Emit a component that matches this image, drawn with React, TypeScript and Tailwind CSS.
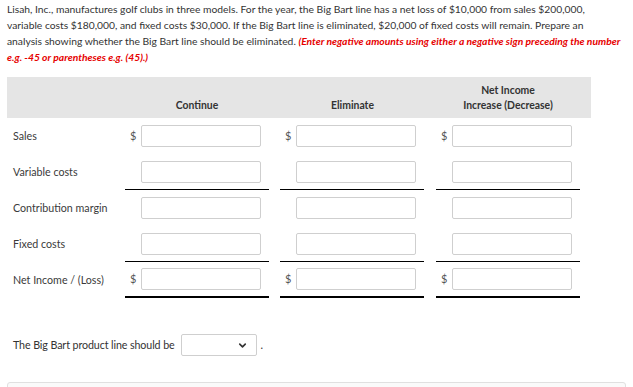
import React from "react"
import { ChevronDown } from "lucide-react"

type Row = {
  label: string
  dollar: boolean
  line: "none" | "single" | "double"
}

const rows: Row[] = [
  { label: "Sales", dollar: true, line: "none" },
  { label: "Variable costs", dollar: false, line: "single" },
  { label: "Contribution margin", dollar: false, line: "none" },
  { label: "Fixed costs", dollar: false, line: "single" },
  { label: "Net Income / (Loss)", dollar: true, line: "double" },
]

const Cell = ({ dollar, line }: { dollar: boolean; line: Row["line"] }) => {
  const border =
    line === "single"
      ? "border-b border-black"
      : line === "double"
        ? "border-b-2 border-black"
        : ""
  return (
    <div className="pr-[11px]">
      <div className={`flex items-center h-[36px] w-[144px] ${border}`}>
        <span className="w-[16px] pl-[5px] text-[11px] text-[#555]">
          {dollar ? "$" : ""}
        </span>
        <input
          type="text"
          className="w-[120px] h-[22px] border border-[#cfcfcf] rounded-[2px] bg-white outline-none"
        />
      </div>
    </div>
  )
}

const App: React.FC = () => {
  return (
    <div
      className="w-[633px] h-[387px] bg-white overflow-hidden px-[7px] pt-[1px] text-[#333]"
      style={{ fontFamily: "Lato, 'Open Sans', sans-serif" }}
    >
      {/* Question text */}
      <p className="text-[10.3px] leading-[16px] w-[622px] whitespace-nowrap">
        Lisah, Inc., manufactures golf clubs in three models. For the year, the Big Bart line has a net loss of $10,000 from sales $200,000,
        <br />
        variable costs $180,000, and fixed costs $30,000. If the Big Bart line is eliminated, $20,000 of fixed costs will remain. Prepare an
        <br />
        analysis showing whether the Big Bart line should be eliminated.{" "}
        <span className="font-bold italic text-[#e60000]">
          (Enter negative amounts using either a negative sign preceding the number
          <br />
          e.g. -45 or parentheses e.g. (45).)
        </span>
      </p>

      {/* Table */}
      <div className="mt-[12px] w-[584px]">
        <div className="grid grid-cols-[118px_155px_156px_155px] h-[41px] bg-[#e5e5e5] text-[10.4px] font-bold leading-[15px] text-[#333]">
          <div />
          <div className="flex items-end justify-center pb-[5px] pr-[11px]">Continue</div>
          <div className="flex items-end justify-center pb-[5px] pr-[11px]">Eliminate</div>
          <div className="flex flex-col items-center justify-end pb-[5px] pr-[11px]">
            <span>Net Income</span>
            <span>Increase (Decrease)</span>
          </div>
        </div>

        {rows.map((row) => (
          <div
            key={row.label}
            className="grid grid-cols-[118px_155px_156px_155px] items-start"
          >
            <div className="h-[36px] flex items-center pl-[6px] text-[10.7px] text-[#3a3a3a]">
              {row.label}
            </div>
            <Cell dollar={row.dollar} line={row.line} />
            <Cell dollar={row.dollar} line={row.line} />
            <Cell dollar={row.dollar} line={row.line} />
          </div>
        ))}
      </div>

      {/* Conclusion */}
      <div className="mt-[36px] pl-[6px] flex items-center text-[10.7px] text-[#333]">
        <span className="tracking-[-0.1px]">The Big Bart product line should be</span>
        <div className="ml-[6px] w-[76px] h-[22px] border border-[#cfcfcf] rounded-[2px] flex items-center justify-end pr-[8px]">
          <ChevronDown size={11} strokeWidth={3.5} className="text-[#333]" />
        </div>
        <span className="ml-[4px]">.</span>
      </div>

      {/* Footer bar */}
      <div className="mt-[26px] h-[20px] w-[619px] border border-[#e0e0e0] rounded-t-[3px] bg-[#fafafa]" />
    </div>
  )
}

export default App
